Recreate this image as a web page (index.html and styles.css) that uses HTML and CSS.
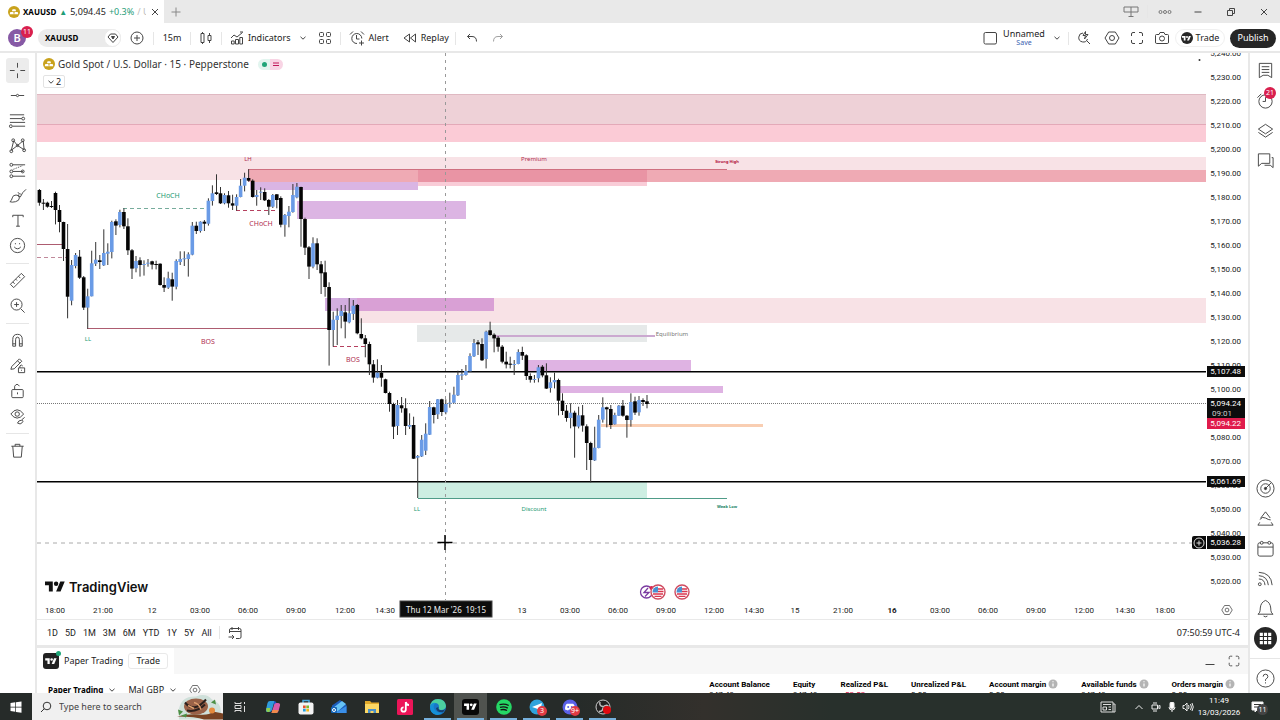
FILE: index.html
```html
<!DOCTYPE html>
<html lang="en">
<head>
<meta charset="utf-8">
<title>XAUUSD 5,094.45</title>
<link rel="stylesheet" href="styles.css">
</head>
<body>
<svg class="defs" aria-hidden="true">
  <symbol id="gold" viewBox="0 0 12 12"><g stroke="none"><circle cx="6" cy="6" r="6" fill="#c9a21c"/><path d="M4.600 3.200h2.800l.700 2H3.900zM2.300 6.100h3l.500 2.200H1.700zM6.700 6.100h3l.600 2.200H6.200z" fill="#fff"/></g></symbol>
  <symbol id="chev" viewBox="0 0 8 8"><path d="M1.500 2.800L4 5.200l2.500-2.400"/></symbol>
  <symbol id="tv" viewBox="0 0 36 28"><path d="M14 22H7V11H0V4h14zM28 22h-8l7.500-18h8z" fill="currentColor" stroke="none"/><circle cx="20" cy="8" r="4" fill="currentColor" stroke="none"/></symbol>
  <symbol id="hex" viewBox="0 0 16 16"><path d="M4.700 2h6.600L15 8l-3.700 6H4.700L1 8z"/><circle cx="8" cy="8" r="2.500"/></symbol>
  <symbol id="full" viewBox="0 0 16 16"><path d="M2.500 6V4q0-1.500 1.500-1.500h2M10 2.500h2q1.500 0 1.500 1.500v2M13.500 10v2q0 1.500-1.500 1.500h-2M6 13.500H4q-1.500 0-1.500-1.500v-2"/></symbol>
  <symbol id="flag" viewBox="0 0 16 16"><circle cx="8" cy="8" r="7" fill="#fff" stroke="#cf4b60" stroke-width="1.400"/><path d="M8 5h5M8 7.500h5.500M3 10h10M4.500 12.300h7" stroke="#d9364f" stroke-width="1.300"/><path d="M8 2.500V8.500H2.500A5.500 5.500 0 0 1 8 2.500z" fill="#4a90d0" stroke="none"/></symbol>
  <symbol id="info" viewBox="0 0 10 10"><circle cx="5" cy="5" r="4.500" fill="#b4b4b4" stroke="none"/><path d="M5 4.400v3M5 2.300v1" stroke="#fff" stroke-width="1.200"/></symbol>
</svg>

<header class="tabs">
  <div class="tab">
    <svg class="i12"><use href="#gold"/></svg><b>XAUUSD</b><span class="up tri">▲</span><span>5,094.45</span><span class="up">+0.3%</span><span class="dim">/ U</span>
    <button class="close" aria-label="Close tab"><svg class="i10" viewBox="0 0 10 10"><path d="M2 2l6 6M8 2L2 8"/></svg></button>
  </div>
  <button class="newtab" aria-label="New tab"><svg class="i12" viewBox="0 0 12 12"><path d="M6 1.500v9M1.500 6h9"/></svg></button>
  <div class="win">
    <button aria-label="Link"><svg class="i16" viewBox="0 0 16 16"><path d="M1 3h14v5H1zM8 3v10M5.500 12.500h5" stroke="#777"/></svg></button>
    <i class="vsep"></i>
    <button aria-label="More"><svg class="i16" viewBox="0 0 16 16"><g stroke="#777"><circle cx="3.500" cy="8" r="1.500"/><circle cx="8" cy="8" r="1.500"/><circle cx="12.500" cy="8" r="1.500"/></g></svg></button>
    <button aria-label="Minimise"><svg class="i12" viewBox="0 0 12 12"><path d="M2.500 6h7"/></svg></button>
    <button aria-label="Restore"><svg class="i12" viewBox="0 0 12 12"><path d="M2.500 4.500h5v5h-5zM4.500 4V2.500h5v5H8"/></svg></button>
    <button aria-label="Close"><svg class="i12" viewBox="0 0 12 12"><path d="M3 3l6 6M9 3L3 9"/></svg></button>
  </div>
</header>

<div class="toolbar">
  <button class="avatar" aria-label="Account">B<span class="badge">11</span></button>
  <button class="symbol"><b>XAUUSD</b><span class="gem"><svg class="i12" viewBox="0 0 12 12"><path d="M3.500 2h5L11 5 6 10.500 1 5z"/><path d="M4.500 4.500h3L6 7z" fill="#333"/></svg></span></button>
  <button class="w32" aria-label="Compare"><svg class="i16" viewBox="0 0 16 16"><circle cx="8" cy="8" r="6"/><path d="M8 5v6M5 8h6"/></svg></button>
  <i class="vsep"></i>
  <button class="w36">15m</button>
  <i class="vsep"></i>
  <button class="w30" aria-label="Candles"><svg class="i14" viewBox="0 0 14 14"><path d="M3.500 1v12M10.500 2v2M10.500 10v2" /><path d="M2 2.500h3v9H2z" fill="#fff"/><path d="M9 4.500h3v5H9z"/></svg></button>
  <i class="vsep"></i>
  <button class="ind"><svg class="i14" viewBox="0 0 14 14"><path d="M1.500 13v-3h2.700v3zM5.500 13V8.500h3V13zM9.800 13V6.500h2.700V13zM1 7l3-3 3 2 5.500-4.500M10 1h3"/></svg>Indicators</button>
  <button class="w25" aria-label="Favourite indicators"><svg class="i8"><use href="#chev"/></svg></button>
  <button class="w18" aria-label="Templates"><svg class="i14" viewBox="0 0 14 14"><rect x="1.500" y="1.500" width="4" height="4" rx="1"/><rect x="8.500" y="1.500" width="4" height="4" rx="1"/><rect x="1.500" y="8.500" width="4" height="4" rx="1"/><rect x="8.500" y="8.500" width="4" height="4" rx="1"/></svg></button>
  <i class="vsep gap6"></i>
  <button class="txt"><svg class="i16" viewBox="0 0 16 16"><path d="M12.800 8.500A5 5 0 1 0 8 13.500M7.500 5v4h3M1 4.500L4 1.500M15 4.500l-3-3M12.500 10.500v5M10 13h5"/></svg>Alert</button>
  <button class="txt"><svg class="i14" viewBox="0 0 14 14"><path d="M6.500 3v8L1 7zM12.500 3v8L7.500 7z"/></svg>Replay</button>
  <i class="vsep"></i>
  <button class="w32" aria-label="Undo"><svg class="i12" viewBox="0 0 12 12"><path d="M4 2L1.500 4.500 4 7M1.500 4.500H6q4.500 0 4.500 5"/></svg></button>
  <button class="w18 faint" aria-label="Redo"><svg class="i12" viewBox="0 0 12 12"><path d="M8 2l2.500 2.500L8 7M10.500 4.500H6q-4.500 0-4.500 5"/></svg></button>
  <span class="grow"></span>
  <button class="w25" aria-label="Layout"><svg class="i16" viewBox="0 0 16 16"><rect x="2" y="2.500" width="12.500" height="11.500" rx="1.500"/></svg></button>
  <button class="layout"><span>Unnamed</span><small>Save</small></button>
  <button class="w22" aria-label="Layouts"><svg class="i8"><use href="#chev"/></svg></button>
  <i class="vsep"></i>
  <button class="w30" aria-label="Quick search"><svg class="i14" viewBox="0 0 14 14"><path d="M6 2A4.500 4.500 0 1 0 10.500 8M9.500 9.500L13 13M8.500.500L6 4.500h2.500L7.500 8 11 3.500H8.500z"/></svg></button>
  <button class="w25" aria-label="Settings"><svg class="i16"><use href="#hex"/></svg></button>
  <button class="w25" aria-label="Full screen"><svg class="i16"><use href="#full"/></svg></button>
  <button class="w25" aria-label="Snapshot"><svg class="i16" viewBox="0 0 16 16"><path d="M2.500 4.500H5l1-2h4l1 2h2.500q1 0 1 1V12q0 1.500-1 1.500h-11q-1 0-1-1.500V5.500q0-1 1-1z"/><circle cx="8" cy="8.500" r="2.500"/></svg></button>
  <button class="trade"><span class="disc"><svg><use href="#tv"/></svg></span>Trade</button>
  <button class="publish">Publish</button>
</div>

<main class="work">
  <nav class="left">
    <button class="on" aria-label="Cross"><svg viewBox="0 0 20 20"><path d="M10 2v5M10 13v5M2 10h5M13 10h5"/></svg></button>
    <button aria-label="Line"><svg viewBox="0 0 20 20"><path d="M3 10h5.500M11.500 10H17"/><circle cx="10" cy="10" r="1.200"/></svg></button>
    <button aria-label="Fib"><svg viewBox="0 0 20 20"><path d="M2 4h15M2 8h12.500M2 12h16M5 16h13"/><circle cx="16" cy="8" r="1.500"/><circle cx="3" cy="16" r="1.500"/></svg></button>
    <button aria-label="Pattern"><svg viewBox="0 0 20 20"><path d="M3.500 15L6 5l4 5 6-5 1 9.500L10 10l-6.500 5"/><circle cx="3.500" cy="16" r="1.500"/><circle cx="5.500" cy="4.500" r="1.500"/><circle cx="15.500" cy="4.500" r="1.500"/><circle cx="17" cy="15" r="1.500"/><circle cx="10" cy="10" r="1.200"/></svg></button>
    <button aria-label="Forecast"><svg viewBox="0 0 20 20"><path d="M5 4h13M5 11h11M5 16h13"/><path d="M5 9l10-4" stroke-dasharray="1 1"/><circle cx="3.500" cy="4" r="1.500"/><circle cx="3.500" cy="11" r="1.500"/><circle cx="3.500" cy="16" r="1.500"/><circle cx="15.500" cy="11" r="1.500"/></svg></button>
    <button aria-label="Brush"><svg viewBox="0 0 20 20"><path d="M2 16.500q2-1 2.500-4t4-3 3.500 3-4 4-6 0M11 9q0 3 2 2.500 2-5 6-8M10.500 6.500q1 2.500 3 2"/></svg></button>
    <button aria-label="Text"><svg viewBox="0 0 20 20"><path d="M5 6.500V4.500h11v2M10.500 4.500v11.500M8.500 16h4"/></svg></button>
    <button aria-label="Emoji"><svg viewBox="0 0 20 20"><circle cx="10" cy="10" r="7.500"/><path d="M6.500 11.500q3.500 4 7 0M7.800 7.500v1.200M12.200 7.500v1.200"/></svg></button>
    <hr>
    <button aria-label="Measure"><svg viewBox="0 0 20 20"><path d="M2.500 14L14 2.500 17.500 6 6 17.500zM5 11.500l2 2M8 8.500l1.500 1.500M11 5.500l2 2"/></svg></button>
    <button aria-label="Zoom"><svg viewBox="0 0 20 20"><circle cx="9" cy="9" r="5.800"/><path d="M13.500 13.500l4 4M9 6.500v5M6.500 9h5"/></svg></button>
    <hr>
    <button aria-label="Magnet"><svg viewBox="0 0 20 20"><path d="M5 16V9q0-5.500 5-5.500T15 9v7h-3V9q0-2.500-2-2.500T8 9v7zM5 13.500h3M12 13.500h3"/></svg></button>
    <button aria-label="Lock drawing mode"><svg viewBox="0 0 20 20"><path d="M3 14l1-3 8-8 2.500 2.500-8 8zM10 5l2.500 2.500M11 12.500h6.500v5H11zM12.500 12.500v-2q1.500-2 3 0M14.200 14.500v1"/></svg></button>
    <button aria-label="Lock"><svg viewBox="0 0 20 20"><rect x="4" y="9" width="12" height="8.500" rx="1"/><path d="M7 9V5.500q2.500-4 5 0M10 12v2"/></svg></button>
    <button aria-label="Hide"><svg viewBox="0 0 20 20"><path d="M3 8.500q6.500-9 13.500 0-7 8.500-13.500 0z"/><circle cx="9.700" cy="8.500" r="2.300"/><path d="M10 18q1-3 4-3t1 2.500-5 .500M14.500 14.500l3-2.500"/></svg></button>
    <hr>
    <button aria-label="Remove"><svg viewBox="0 0 20 20"><path d="M3.500 5.500h13M7.500 5.500v-2h5v2M5 5.500L6 17h8l1-11.500"/></svg></button>
  </nav>

  <section class="center">
    <div class="chartrow">
      <div class="plot">
        <svg class="chart" id="chart" role="img" aria-label="Gold Spot 15 minute candles"></svg>
        <div class="legend">
          <div class="title"><svg class="i12"><use href="#gold"/></svg>Gold Spot / U.S. Dollar · 15 · Pepperstone<span class="status"><i></i><svg class="i8" viewBox="0 0 8 8"><path d="M1 3h6M1 5.500h6" stroke="#c2185b"/></svg></span></div>
          <button class="count"><svg class="i8"><use href="#chev"/></svg>2</button>
        </div>
        <div class="brand"><svg><use href="#tv"/></svg>TradingView</div>
      </div>
      <div class="scale">
        <ol id="prices"></ol>
        <span class="tag t1">5,107.48</span>
        <span class="tag t2">5,094.24<small>09:01</small></span>
        <span class="tag t3">5,094.22</span>
        <span class="tag t4">5,061.69</span>
        <span class="tag t5">5,036.28</span>
        <button class="plus" aria-label="Add alert"><svg class="i12" viewBox="0 0 12 12"><circle cx="6" cy="6" r="5"/><path d="M6 3.500v5M3.500 6h5"/></svg></button>
      </div>
    </div>
    <div class="timerow">
      <svg class="times" id="times"></svg>
      <button aria-label="Axis settings"><svg class="i12" viewBox="0 0 16 16"><use href="#hex"/></svg></button>
    </div>
    <div class="ranges">
      <button>1D</button><button>5D</button><button>1M</button><button>3M</button><button>6M</button><button>YTD</button><button>1Y</button><button>5Y</button><button>All</button>
      <i class="vsep"></i>
      <button aria-label="Go to date"><svg class="i14" viewBox="0 0 14 14"><path d="M1.500 7V4q0-1.500 1.500-1.500h8.500q1.500 0 1.500 1.500v7q0 1.500-1.500 1.500H8M1.500 5.500H13M4 1v3M10.500 1v3M.500 11H6M4 9l2 2-2 2"/></svg></button>
      <span class="clock">07:50:59 UTC-4</span>
    </div>
    <div class="panel">
      <div class="ptabs">
        <div class="pactive"><span class="app"><svg><use href="#tv"/></svg><i></i></span>Paper Trading<button class="ptrade">Trade</button></div>
        <button aria-label="Minimise panel"><svg class="i12" viewBox="0 0 12 12"><path d="M1.500 9.500h9" /></svg></button>
        <button aria-label="Maximise panel"><svg class="i14" viewBox="0 0 16 16"><use href="#full"/></svg></button>
      </div>
      <div class="pbody">
        <button><b>Paper Trading</b><svg class="i8"><use href="#chev"/></svg></button>
        <button>Mal GBP<svg class="i8"><use href="#chev"/></svg></button>
        <button aria-label="Account settings"><svg class="i12" viewBox="0 0 16 16"><use href="#hex"/></svg></button>
        <table>
          <thead><tr><th>Account Balance</th><th>Equity</th><th>Realized P&amp;L</th><th>Unrealized P&amp;L</th><th>Account margin <svg class="i10"><use href="#info"/></svg></th><th>Available funds <svg class="i10"><use href="#info"/></svg></th><th>Orders margin <svg class="i10"><use href="#info"/></svg></th></tr></thead>
          <tbody><tr><td>947.49</td><td>947.49</td><td class="neg">−52.52</td><td>0.00</td><td>0.00</td><td>947.49</td><td>0.00</td></tr></tbody>
        </table>
      </div>
    </div>
  </section>

  <nav class="right">
    <button aria-label="Watchlist"><svg viewBox="0 0 20 20"><path d="M3.500 2.500h13v15l-4-2.500h-5l-4 2.500zM6 6h8M6 9h8M6 12h8"/></svg></button>
    <button aria-label="Alerts"><svg viewBox="0 0 20 20"><circle cx="10" cy="11" r="7"/><path d="M10 6.500V11H7M1.500 7L5.500 3"/></svg><span class="badge">21</span></button>
    <button aria-label="Object tree"><svg viewBox="0 0 20 20"><path d="M10 3.500L17.500 8.500 10 13.500 2.500 8.500zM2.500 12l7.500 5 7.500-5"/></svg></button>
    <button aria-label="Chat"><svg viewBox="0 0 20 20"><path d="M2.500 3h12v10H6l-3.500 3zM16.500 7H18v10.500l-3-2.500H9"/></svg></button>
    <span class="grow"></span>
    <button aria-label="Screener"><svg viewBox="0 0 20 20"><circle cx="10" cy="10" r="9"/><circle cx="10" cy="10" r="5"/><circle cx="10" cy="10" r="1.200" fill="#222"/><path d="M10 10l6-6"/></svg></button>
    <button aria-label="Pine"><svg viewBox="0 0 20 20"><path d="M5 9.500L10 3l5 6.500M4 11q3-3.500 6-1.500t5.500 2M4 14l-2 3h16l-2-3"/></svg></button>
    <button aria-label="Calendar"><svg viewBox="0 0 20 20"><rect x="2" y="4" width="16" height="14" rx="2"/><path d="M2 8.500h16"/><circle cx="6" cy="4" r="1.500" fill="#fff"/><circle cx="14" cy="4" r="1.500" fill="#fff"/></svg></button>
    <button aria-label="News"><svg viewBox="0 0 20 20"><circle cx="4" cy="16" r="1.500"/><path d="M3 10.500q6 0 6.500 6.500M3 7q9 .500 10 10M3 3.500q13 .500 14 13.500"/></svg></button>
    <button aria-label="Notifications"><svg viewBox="0 0 20 20"><path d="M2 16q2.500-1 2.500-6.500Q5 3.500 10 1.500q5 2 5.500 8 0 5.500 2.500 6.500zM8 18q2 1.500 4 0"/></svg></button>
    <button aria-label="Apps"><svg class="apps" viewBox="0 0 22 22"><circle cx="11" cy="11" r="11" fill="#262626" stroke="none"/><path d="M5.500 7h3m1 0h3m1 0h3M5.500 11h3m1 0h3m1 0h3M5.500 15h3m1 0h3m1 0h3" stroke="#fff" stroke-width="3"/></svg></button>
    <hr>
    <button aria-label="Help"><svg viewBox="0 0 20 20"><circle cx="10" cy="10" r="9"/><path d="M7.500 8q0-2.500 2.500-2.500T12.500 8q0 1.500-2.500 3v1.500M10 14v1.200"/></svg></button>
  </nav>
</main>

<footer class="taskbar">
  <button class="start" aria-label="Start"><svg class="i12" viewBox="0 0 12 12"><path d="M.500 2l4.800-.700v4.400H.500zM6 1.200l5.500-.800v5.300H6zM.500 6.400h4.800v4.400l-4.800-.700zM6 6.400h5.500v5.300L6 10.900z" fill="#fff" stroke="none"/></svg></button>
  <label class="search"><svg class="i12" viewBox="0 0 12 12"><circle cx="7" cy="5" r="3.800"/><path d="M4.300 7.700L1 11"/></svg><input type="text" placeholder="Type here to search" aria-label="Search">
    <svg class="pic" viewBox="0 0 48 26"><path d="M3 15Q6 2 20 3q10-4 16 3 9 3 9 12v8H3z" fill="#cfe0da"/><path d="M1 23q12-3 22-2t14-3l10 2v6H28q-8-3-27-3z" fill="#7a4424"/><ellipse cx="20" cy="13" rx="12" ry="8" fill="#9a6248"/><path d="M9 9q9 11 21-3M11 17q10 2 18-6" stroke="#2c201d" stroke-width="2"/><path d="M18 9q5 1 7 7M12 12l6 3" stroke="#e0a070" stroke-width="1.500"/><path d="M2 16l5 2-4 4zM35 9l4-3 1 5zM5 22l6-2-1 4z" fill="#4b8f44"/><circle cx="36" cy="17" r="3" fill="#e58a3c"/></svg>
  </label>
  <button class="app32" aria-label="Task view"><svg class="i12" viewBox="0 0 12 12"><path d="M1 1v1.500h6V1M1 4.500h6v3H1zM1 11V9.500h6V11M10.500 1v2M10.500 5v6" stroke="#ddd"/></svg></button>
  <button class="app32" aria-label="Copilot"><svg class="i16" viewBox="0 0 16 16"><path d="M5 2h4.500L7 11q-.500 2-2.500 2H2.500q-2 0-1.500-2.500L2.500 4Q3 2 5 2z" fill="#2e9bdc"/><path d="M9 2q2 0 2.500 2L12 6H9z" fill="#1c58c8"/><path d="M11 14H6.500L9 6q.500-2 2.500-2H13q2.500 0 2 2.500L13.500 12q-.500 2-2.500 2z" fill="#d85aa8"/><path d="M1.500 9h4l-1 4H3q-2.500 0-1.500-4z" fill="#8fcf4c"/><path d="M7.500 11h6l-.500 1.500q-.500 1.500-2 1.500H6.500z" fill="#f08a4c"/></svg></button>
  <button class="app32" aria-label="Store"><svg class="i16" viewBox="0 0 16 16"><path d="M5 4V1.500h6V4" stroke="#4aa8dc" stroke-width="1.500"/><rect x=".500" y="3.500" width="15" height="12" rx="2" fill="#f3f3f3"/><path d="M5 6.500h2.700v2.700H5z" fill="#e8502e"/><path d="M8.300 6.500H11v2.700H8.300z" fill="#7cb82f"/><path d="M5 9.800h2.700v2.700H5z" fill="#22a0e0"/><path d="M8.300 9.800H11v2.700H8.300z" fill="#f5b81c"/></svg></button>
  <button class="app32" aria-label="Mail"><svg class="i16" viewBox="0 0 16 16"><path d="M1 6.500L9 1l6.500 5V14H1z" fill="#1c5dbb"/><path d="M2 9l9-7 4 3-9 8z" fill="#66c3f5"/><path d="M4 14l11.500-7v7z" fill="#3a8fe8"/><rect y="8" width="6" height="6" rx="1" fill="#1566b8"/><circle cx="3" cy="11" r="1.500" stroke="#fff"/></svg></button>
  <button class="app32" aria-label="Explorer"><svg class="i16" viewBox="0 0 16 16"><path d="M1 2h5l1.500 1.500H15V13H1z" fill="#e0a82a"/><path d="M1 5h14v9H1z" fill="#fbd764"/><path d="M4 14v-4h8v4h-2.500v-2h-3v2z" fill="#4a90c8"/></svg></button>
  <button class="app32" aria-label="TikTok"><svg class="i16" viewBox="0 0 16 16"><rect width="16" height="16" rx="1.500" fill="#ec1558"/><path d="M8.800 3v7.500a2.200 2.200 0 1 1-2.200-2.200M8.800 3q.500 3 3.200 3" stroke="#fff" stroke-width="1.800"/></svg></button>
  <button class="app32 run" aria-label="Edge"><svg class="i16" viewBox="0 0 16 16"><circle cx="8" cy="8" r="8" fill="#1976c8"/><path d="M0 8Q1 0 8 0t8 7q-.500 4-5 4-3 0-2-3Q9 4 5 4 1 4.500 0 8z" fill="#4cd0a0"/><path d="M0 8q1.500-5 5.500-4Q2 7 5 11t8 2q-3 3.500-7 2.800Q0 14.500 0 8z" fill="#1590d8"/><path d="M8.500 8q-1 3 3 3.200 2.500 0 4-1.500l-2.500 3.500Q7 14 6 9z" fill="#173f70"/></svg></button>
  <button class="app32 run cur" aria-label="TradingView"><span class="black"><svg><use href="#tv"/></svg></span></button>
  <button class="app32 run" aria-label="Spotify"><svg class="i16" viewBox="0 0 16 16"><circle cx="8" cy="8" r="7.800" fill="#25d865"/><path d="M3.500 5.700q5-1.500 9.200.800M4 8.300q4.300-1.200 7.800.800M4.500 10.800q3.500-1 6.500.700" stroke="#141414" stroke-width="1.400"/></svg></button>
  <button class="app32 run" aria-label="Telegram"><svg class="i16" viewBox="0 0 16 16"><circle cx="8" cy="8" r="7.500" fill="#2fa3dc"/><path d="M3 8l10-4-2 8-3.500-2.500z" fill="#fff"/></svg><span class="badge">3</span></button>
  <button class="app32 run" aria-label="Discord"><svg class="i16" viewBox="0 0 16 16"><circle cx="8" cy="8" r="7.500" fill="#5a61e8"/><path d="M3 10.500Q3 6 5 4.800h6q2 1.200 2 5.700l-3 1-1-1H7l-1 1z" fill="#fff"/><circle cx="6.200" cy="8" r="1" fill="#5a61e8"/><circle cx="9.800" cy="8" r="1" fill="#5a61e8"/></svg><span class="badge">9+</span></button>
  <button class="app32 run" aria-label="OBS"><svg class="i16" viewBox="0 0 16 16"><circle cx="8" cy="8" r="7" fill="#222" stroke="#ccc"/><path d="M8 7.500Q4 7 5 3M8 8q3-3 5.500-.500M8 8.500q0 4-4 4" stroke="#bbb" stroke-width="1.500"/></svg><span class="badge rec"></span></button>
  <span class="grow"></span>
  <button class="tray" aria-label="News"><svg class="i16" viewBox="0 0 16 16"><path d="M1 3h12v10H1zM13 5h2v8h-2M3 5.500h8M3 8h3.500v3H3zM8.500 8H11M8.500 10.500H11" stroke="#ddd"/></svg></button>
  <button class="tray wide" aria-label="Hidden icons"><svg class="i10" viewBox="0 0 10 10"><path d="M1.500 7L5 3.500 8.500 7"/></svg></button>
  <button class="tray" aria-label="Meet now"><svg class="i10" viewBox="0 0 10 10"><path d="M1 3h5.500v4H1zM6.500 4.500L9 3.500v3l-2.500-1M2 1h4M2 9h4"/></svg></button>
  <button class="tray" aria-label="Microphone"><svg class="i10" viewBox="0 0 10 10"><rect x="3" y="0" width="4" height="6.500" rx="1.500" fill="#fff"/><path d="M2 5q0 3 3 3t3-3M5 8v2"/></svg></button>
  <button class="tray" aria-label="Volume"><svg class="i12" viewBox="0 0 12 12"><path d="M1 4.500h1.500L5 2v8L2.500 7.500H1zM6.500 4q1 2 0 4M8.500 3q1.800 3 0 6M10 2q2.500 4 0 8"/></svg></button>
  <div class="date"><span>11:49</span><span>13/03/2026</span></div>
  <button class="note" aria-label="Notifications"><svg class="i14" viewBox="0 0 14 14"><path d="M1 2h11v8H6l-2 2v-2H1z" fill="#fff"/><path d="M3 4.500h7M3 7h5" stroke="#333"/></svg><span>11</span></button>
</footer>
<script src="chart.js"></script>
</body>
</html>
```
FILE: styles.css
```css
* { box-sizing: border-box; }
body { margin: 0; height: 100vh; display: flex; flex-direction: column; overflow: hidden; background: #fff; color: #222; font: 10px/12px "Noto Sans", "Open Sans", sans-serif; }
button { border: 0; padding: 0; margin: 0; background: none; font: inherit; color: inherit; display: flex; align-items: center; justify-content: center; flex: none; white-space: nowrap; position: relative; }
svg { fill: none; stroke: #444; stroke-width: 1; flex: none; display: block; }
.defs { position: absolute; width: 0; height: 0; }
.i8 { width: 8px; height: 8px; } .i10 { width: 10px; height: 10px; } .i12 { width: 12px; height: 12px; } .i14 { width: 14px; height: 14px; } .i16 { width: 16px; height: 16px; }
.grow { flex: 1; }
.vsep { width: 1px; height: 13px; background: #e6e6e6; flex: none; }
.w18 { width: 18px; } .w22 { width: 22px; } .w25 { width: 25px; } .w30 { width: 30px; } .w32 { width: 32px; } .w36 { width: 36px; }

.tabs { height: 23px; flex: none; display: flex; background: #e9e9e9; }
.tab { width: 164px; background: #fff; display: flex; align-items: center; gap: 3px; padding: 1px 3px 0 8px; font-size: 9px; white-space: nowrap; }
.tab b { font-size: 8px; color: #000; }
.tab .up { color: #1f9d78; }
.tab .tri { font-size: 8px; }
.tab .dim { color: #bbb; flex: 1; min-width: 0; overflow: hidden; }
.close { width: 12px; }
.newtab { width: 24px; }
.newtab svg { stroke: #888; }
.win { margin-left: auto; display: flex; align-items: center; }
.win button { width: 33px; }

.toolbar { height: 30px; flex: none; display: flex; align-items: center; padding: 2px 4px 0 8px; border-bottom: 2px solid #e8e8e8; font-size: 9px; }
.avatar { width: 18px; height: 18px; border-radius: 9px; background: #8659a5; color: #fff; font-size: 11px; font-weight: 600; }
.badge { position: absolute; background: #d9204e; color: #fff; border-radius: 6px; min-width: 12px; height: 12px; line-height: 12px; font-size: 7px; font-weight: 400; text-align: center; }
.avatar .badge { left: 13px; top: -3px; }
.symbol { margin-left: 12px; width: 83px; height: 18px; border-radius: 9px; background: #ebebeb; justify-content: space-between; padding: 0 0 0 7px; color: #000; font-size: 8px; }
.gem { width: 17px; height: 18px; border-radius: 9px; background: #fff; border: 1px solid #ebebeb; display: flex; align-items: center; justify-content: center; }
.ind { gap: 4px; padding-left: 8px; }
.gap6 { margin-left: 6px; }
.txt { gap: 4px; padding: 0 6px 0 8px; }
.faint { opacity: .5; margin-left: 1px; }
.layout { flex-direction: column; width: 44px; line-height: 10px; }
.layout small { font-size: 7px; line-height: 8px; color: #3a62b0; }
.trade { margin-left: 1px; height: 18px; width: 50px; border: 1px solid #f0f0f0; border-radius: 9px; gap: 3px; }
.disc { width: 12px; height: 12px; border-radius: 6px; background: #262626; color: #fff; display: flex; align-items: center; justify-content: center; }
.disc svg { width: 9px; height: 7px; }
.publish { margin-left: 5px; width: 46px; height: 19px; border-radius: 10px; background: #262626; color: #fff; }

.work { flex: 1; min-height: 0; display: flex; }
.left { width: 37px; flex: none; border-right: 2px solid #e8e8e8; padding: 5px 6px 0 6px; }
.left button { width: 23px; height: 25px; }
.left .on { background: #ececec; border-radius: 3px; }
.left svg { width: 19px; height: 19px; }
.left hr, .right hr { border: 0; margin: 5px 0 4px; height: 1px; background: #e6e6e6; align-self: stretch; }
.right { width: 32px; flex: none; border-left: 2px solid #e8e8e8; padding-top: 2px; display: flex; flex-direction: column; align-items: center; }
.right button { width: 30px; height: 30px; }
.right svg { width: 19px; height: 19px; }
.right .apps { width: 23px; height: 23px; }
.right .badge { left: 14px; top: 2px; }

.center { flex: 1; min-width: 0; display: flex; flex-direction: column; }
.chartrow { flex: 1; min-height: 0; display: flex; }
.plot { flex: 1; min-width: 0; position: relative; }
.chart { position: absolute; width: 100%; height: 100%; stroke: none; }
.chart text, .times text { font-family: "Noto Sans", sans-serif; font-size: 7px; stroke: none; }
.legend { position: absolute; left: 6px; top: 4px; }
.title { display: flex; align-items: center; gap: 3px; height: 14px; font-size: 10px; color: #333; white-space: nowrap; }
.status { margin-left: 6px; width: 25px; height: 11px; border-radius: 6px; background: linear-gradient(90deg, #e2f5ef 50%, #f8d4e4 50%); display: flex; align-items: center; justify-content: space-between; padding: 0 3px 0 4px; }
.status i { width: 5px; height: 5px; border-radius: 3px; background: #1fa578; }
.count { margin-top: 4px; height: 13px; width: 22px; border: 1px solid #e3e3e3; border-radius: 2px; gap: 1px; font-size: 9px; background: #fff; }
.brand { position: absolute; left: 8px; bottom: 5px; display: flex; align-items: center; gap: 4px; color: #111; font: 600 13px/16px Inter, sans-serif; }
.brand svg { width: 20px; height: 16px; }
.scale { width: 42px; flex: none; position: relative; overflow: visible; font: 8px/24px Roboto, sans-serif; }
.scale ol { list-style: none; margin: 0; padding: 0 7px 0 0; height: 100%; overflow: hidden; text-align: right; }
.scale li { height: 24px; }
.scale li:first-child { margin-top: -11px; }
.tag { position: absolute; left: 1px; width: 38px; background: #0c0c0c; color: #fff; line-height: 11px; padding-right: 4px; text-align: right; }
.tag small { display: block; font-size: 8px; text-align: left; padding-left: 5px; line-height: 9px; color: #ccc; }
.t1 { top: 313px; } .t2 { top: 345px; } .t3 { top: 365px; background: #e01c4c; } .t4 { top: 423px; } .t5 { top: 483px; line-height: 13px; }
.plus { position: absolute; left: -14px; top: 483px; width: 14px; height: 13px; background: #0c0c0c; border-radius: 2px 0 0 2px; }
.plus svg { stroke: #ddd; }
.timerow { height: 19px; flex: none; display: flex; }
.times { flex: 1; height: 19px; min-width: 0; }
.times text { font-family: Roboto, sans-serif; font-size: 8px; }
.timerow button { width: 42px; }
.ranges { height: 26px; flex: none; display: flex; align-items: center; padding: 0 8px 0 10px; border-top: 1px solid #e9e9e9; gap: 7px; font: 9px/12px Roboto, sans-serif; }
.ranges .vsep + button { margin-left: 1px; }
.clock { margin-left: auto; font: 9px/12px "Noto Sans", sans-serif; }
.panel { height: 48px; flex: none; border-top: 3px solid #e8e8e8; overflow: hidden; }
.ptabs { height: 26px; display: flex; align-items: center; gap: 11px; padding-right: 7px; background: #f7f7f7; font-size: 9px; }
.pactive { height: 26px; width: 137px; margin-right: auto; background: #fff; display: flex; align-items: center; gap: 5px; padding-left: 6px; white-space: nowrap; }
.app { position: relative; width: 16px; height: 16px; border-radius: 3px; background: #222; color: #fff; display: flex; align-items: center; justify-content: center; }
.app svg { width: 12px; height: 9px; }
.app i { position: absolute; right: -2px; top: -2px; width: 5px; height: 5px; border-radius: 3px; background: #1fa578; }
.ptrade { height: 16px; width: 40px; border: 1px solid #e9e9e9; border-radius: 3px; }
.pbody { display: flex; align-items: flex-start; padding: 5px 13px 0 11px; gap: 12px; font-size: 9px; }
.pbody button { height: 14px; gap: 5px; margin-top: 4px; }
.pbody b { font-size: 8px; color: #000; }
.pbody table { margin-left: auto; border-collapse: collapse; font: 8px/10px Roboto, sans-serif; }
.pbody th, .pbody td { text-align: left; padding: 0 0 0 23px; white-space: nowrap; }
.pbody th { font-weight: 700; color: #000; }
.pbody th svg { display: inline-block; vertical-align: -2px; }
.neg { color: #d9204e; }

.taskbar { height: 27px; flex: none; background: linear-gradient(90deg, #262b29 0 45%, #33302c 55%, #28302c 65%); display: flex; align-items: stretch; color: #fff; position: relative; }
.taskbar svg { stroke: #eee; }
.taskbar .i16 { stroke: none; }
.start { width: 32px; }
.search { width: 191px; background: #f0f0f0; display: flex; align-items: center; padding-left: 8px; gap: 7px; }
.search .i12 { stroke: #333; }
.search input { border: 0; padding: 0; background: none; width: 110px; font: 9px/12px "Noto Sans", sans-serif; color: #333; outline: 0; }
.search input::placeholder { color: #444; opacity: 1; }
.search .pic { width: 48px; height: 27px; stroke: none; margin-left: auto; }
.app32 { width: 33px; }
.run::after { content: ""; position: absolute; left: 3px; right: 3px; bottom: 0; height: 2px; background: #76b0dc; }
.cur { background: #50534f; }
.black { width: 17px; height: 16px; border-radius: 3px; background: #080808; display: flex; align-items: center; justify-content: center; color: #fff; }
.black svg { width: 13px; height: 10px; }
.taskbar .badge { left: 17px; top: 13px; width: 10px; min-width: 10px; height: 10px; line-height: 10px; background: #e03a44; }
.taskbar .rec { background: #e00a10; width: 8px; min-width: 8px; height: 8px; }
.tray { width: 16px; }
.wide { margin-left: 14px; width: 18px; }
.date { width: 46px; display: flex; flex-direction: column; align-items: center; justify-content: center; font: 8px/12px Roboto, sans-serif; }
.note { width: 32px; margin-right: 6px; }
.note span { position: absolute; left: 15px; top: 11px; width: 11px; height: 11px; border-radius: 6px; background: #444; font-size: 7px; line-height: 11px; }
```
FILE: chart.js
```js
// Chart space: the plot's top-left corner is (37, 53).
const OX = 37, OY = 53;
const BLUE = '#6a9be6', BLACK = '#050505';

// One string per run of candles: high,top,bottom,low,colour in thirds of a pixel below the base.
const runs = [
  [50, `417,420,458,467,k 447,458,461,480,k 455,458,470,473,k 453,468,470,474,k 425,429,480,523,k 465,480,516,547,k 515,516,597,633,k 522,597,740,805,k 630,645,752,766,b 609,615,648,655,b 600,620,683,687,k 678,682,773,780,k 716,739,773,836,b 602,640,739,739,b 576,629,641,648,b 615,631,636,657,k 538,609,646,648,b 580,605,611,645,b 512,516,606,625,b 508,514,527,555,k 479,486,525,532,b 475,486,529,537,k 505,529,601,615,k 597,601,656,687,k 618,633,655,667,b 622,631,645,680,k 631,642,645,677,b 627,638,641,650,b 632,634,644,658,k 632,642,644,658,k 640,641,705,707,k 682,705,713,726,k 665,685,713,717,b 668,688,710,752,k 628,633,710,718,b 604,627,636,645,b 604,625,628,648,b 607,613,627,680,b 516,527,614,616,b 515,527,543,552,k 514,515,543,548,b 510,515,521,543,k 445,452,521,527,b 406,430,453,467,b 373,427,432,435,k 411,430,460,462,k 430,435,460,463,b 423,436,460,473,k 434,460,467,480,k`],
  [140, `163,171,197,212,b 117,137,171,172,b 98,113,137,154,b 88,114,122,125,k 118,122,171,173,k 150,165,171,197,b 142,155,157,180,b 145,156,181,183,k 177,180,200,225,k 162,165,200,204,b 162,163,180,205,k 169,174,254,262,k 222,225,254,290,b 198,215,228,262,b 132,165,216,218,b 129,140,172,175,b 140,141,237,320,k 233,237,323,345,k 318,322,380,417,k 292,310,380,385,b 295,310,373,390,k 363,373,400,462,k 362,397,441,470,k 427,441,570,677,k 515,539,570,620,b 505,527,540,615,b 495,513,528,565,b 495,517,545,595,k 474,520,547,550,b 480,497,522,540,b 492,495,580,583,k 535,582,595,598,k 585,595,612,652,k`],
  [290, `155,162,223,255,k 210,223,263,278,k 208,248,263,265,b 225,248,263,290,k 266,268,309,310,k 305,309,342,365,k 338,342,410,447,k 330,345,408,435,b 321,346,355,368,k 325,355,408,435,k 370,405,410,417,b 380,405,506,507,k 495,498,503,624,b 435,449,499,501,b 400,431,482,495,b 333,351,434,435,b 350,352,375,400,k 327,328,373,387,b 326,328,366,378,k 328,342,367,373,b 308,338,341,353,b 290,314,338,340,b 242,255,316,318,b 237,253,257,270,b 225,243,255,257,b 190,198,244,246,b 147,159,199,201,b 150,157,163,195,k 145,162,211,213,k 122,125,207,235,b 95,121,135,137,k 130,134,145,187,k 138,143,170,185,k 165,170,215,220,k 185,215,223,235,k 200,221,223,235,k 210,222,225,255,b 178,186,222,223,b 170,186,197,210,k 193,196,258,270,k 250,258,269,278,k 255,267,269,278,b 225,232,265,277,b 225,230,256,262,k 220,256,296,297,k 262,277,294,308,b 248,270,277,295,b 266,270,332,376,k 310,332,363,375,k 345,362,384,395,k 340,368,384,415,b 362,368,409,503,k 350,376,410,415,b 345,376,407,425,k 403,409,459,540,k 455,459,510,577,k 410,473,511,513,b 375,389,474,475,b 322,352,389,398,b 350,352,358,412,k 345,357,405,417,k 368,375,403,404,b 345,347,377,378,b 330,347,377,380,k 375,377,390,443,k 310,336,390,410,b 320,334,368,375,k 318,330,367,377,b 325,330,336,348,k 315,334,342,355,k`]
];

// Zones: left, right (0 = to the plot's edge), top, bottom, colour.
const zones = [
  [37, 0, 94, 125, '#eed1d7'], [37, 0, 94, 95, '#dfb9c2'], [37, 0, 125, 142, '#fbcbd6'], [37, 0, 124, 125, '#e3a9b8'],
  [37, 248, 157, 180, '#f8e2e6'], [248, 0, 157, 170, '#f8e2e6'], [248, 0, 170, 182, '#efaab4'],
  [418, 647, 170, 182, '#e994a4'], [418, 647, 182, 186, '#f9ccd7'], [250, 418, 182, 190, '#dab5e4'],
  [297, 466, 201, 219, '#dcb5e3'], [355, 0, 298, 323, '#f8e2e6'], [325, 357, 298, 311, '#d3aee0'], [357, 494, 298, 311, '#d9a0d5'],
  [417, 647, 325, 342, '#e6e9e9'], [495, 655, 335, 337, '#cba9d0'],
  [528, 691, 360, 372, '#dfb3e3'], [557, 723, 386, 393, '#dfb3e3'], [601, 763, 424, 427, '#f9ceb2'],
  [418, 647, 482, 498, '#cdeee2'], [418, 727, 498, 499, '#4f9c88'], [248, 727, 169, 170, '#cf7080'],
  [87, 329, 328, 329, '#ad5c70'], [37, 64, 244, 245, '#ad5c70']
];
const dashes = [[37, 66, 257.5, '#c0899a'], [123, 210, 208.500, '#77ac9c'], [236, 277, 210.500, '#b5405f'], [333, 367, 346.500, '#b5405f']];
const labels = [
  ['CHoCH', 168, 198, '#1a9a72', 7], ['LH', 248, 161, '#b03050', 6], ['CHoCH', 261, 226, '#b03050', 7], ['BOS', 208, 344, '#b03050', 7],
  ['BOS', 353, 362, '#b03050', 7], ['LL', 88, 341, '#1a9a72', 6], ['LL', 417, 511, '#1a9a72', 6], ['Premium', 534, 161, '#b03050', 6],
  ['Discount', 534, 511, '#1a9a72', 6], ['Equilibrium', 672, 336, '#777', 6], ['Strong High', 727, 163, '#b0103c', 4], ['Weak Low', 727, 508, '#108060', 4]
];

let s = '';
for (const [l, r, t, b, c] of zones)
  s += `<rect x="${l - OX}" y="${t - OY}" width="${r ? r - l : '100%'}" height="${b - t}" fill="${c}"/>`;
for (const [l, r, y, c] of dashes)
  s += `<path d="M${l - OX} ${y - OY}H${r - OX}" stroke="${c}" stroke-dasharray="4 3"/>`;
for (const y of [371, 481])
  s += `<rect x="0" y="${y - OY}" width="100%" height="1.500" fill="#000"/>`;
s += `<line x1="0" x2="100%" y1="350.500" y2="350.500" stroke="#777" stroke-dasharray="1 1"/>`;
s += `<line x1="408.500" x2="408.500" y1="0" y2="100%" stroke="#999" stroke-dasharray="3 4"/>`;
s += `<line x1="0" x2="100%" y1="490" y2="490" stroke="#aaa" stroke-dasharray="4 4"/>`;

let n = 0;
for (const [base, text] of runs) {
  for (const item of text.split(' ')) {
    const f = item.split(',');
    const [h, t, b, l] = f.slice(0, 4).map(v => base + v / 3 - OY);
    const x = 39.4 + 4.024 * n++ - OX;
    s += `<rect x="${(x - 0.5).toFixed(1)}" y="${h.toFixed(1)}" width="1" height="${(l - h).toFixed(1)}" fill="#333"/>`;
    s += `<rect x="${(x - 1.8).toFixed(1)}" y="${t.toFixed(1)}" width="3.600" height="${Math.max(1, b - t).toFixed(1)}" fill="${f[4] === 'b' ? BLUE : BLACK}"/>`;
  }
}
for (const [text, x, y, c, size] of labels)
  s += `<text x="${x - OX}" y="${y - OY}" text-anchor="middle" fill="${c}" style="font-size:${size}px${size < 5 ? ';font-weight:700' : ''}">${text}</text>`;
s += `<path d="M400.500 489.500h15M408 482v15" stroke="#000" stroke-width="1.500"/><circle cx="1162.500" cy="7" r="1" fill="#333"/>`;
s += `<circle cx="609.500" cy="539" r="6" fill="#fff" stroke="#7a3aa0" stroke-width="1.300"/><path d="M611 535l-4 4.500h5l-4 4" stroke="#7a3aa0" stroke-width="1.300" fill="none"/><circle cx="614.500" cy="535" r="2" fill="#d9204e"/>`;
s += `<use href="#flag" x="613" y="531" width="16" height="16"/><use href="#flag" x="637" y="531" width="16" height="16"/>`;
document.getElementById('chart').innerHTML = s;

const times = [[55, '18:00'], [103, '21:00'], [152, '12'], [200, '03:00'], [248, '06:00'], [296, '09:00'], [345, '12:00'], [385, '14:30'], [522, '13'], [570, '03:00'], [618, '06:00'], [666, '09:00'], [714, '12:00'], [754, '14:30'], [795, '15'], [843, '21:00'], [892, '16'], [940, '03:00'], [988, '06:00'], [1036, '09:00'], [1084, '12:00'], [1125, '14:30'], [1165, '18:00']];
document.getElementById('times').innerHTML = times.map(([x, t]) =>
  `<text x="${x - OX}" y="13" text-anchor="middle" fill="#222"${t === '16' ? ' font-weight="700"' : ''}>${t}</text>`).join('') +
  `<rect x="363" y="1" width="92" height="16" fill="#0c0c0c"/><text x="369" y="13" fill="#eee" style="font-family:'Noto Sans'">Thu 12 Mar '26</text><text x="449" y="13" text-anchor="end" fill="#eee" style="font-family:'Noto Sans'">19:15</text>`;

let p = '';
for (let v = 5240; v >= 5020; v -= 10) p += `<li>5,${String(v).slice(1)}.00</li>`;
document.getElementById('prices').innerHTML = p;
```
